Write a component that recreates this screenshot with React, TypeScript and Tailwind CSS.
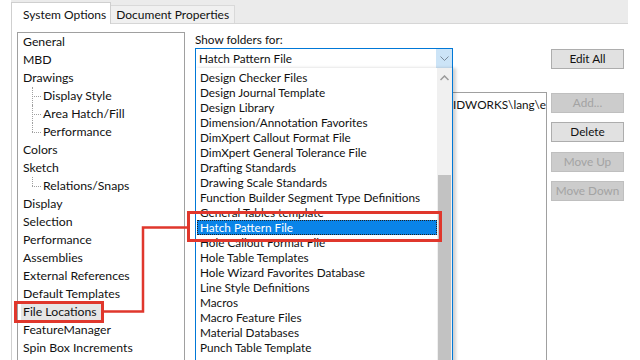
import React from "react";

const treeItems: { label: string; child?: boolean; last?: boolean; selected?: boolean }[] = [
  { label: "General" },
  { label: "MBD" },
  { label: "Drawings" },
  { label: "Display Style", child: true },
  { label: "Area Hatch/Fill", child: true },
  { label: "Performance", child: true, last: true },
  { label: "Colors" },
  { label: "Sketch" },
  { label: "Relations/Snaps", child: true, last: true },
  { label: "Display" },
  { label: "Selection" },
  { label: "Performance" },
  { label: "Assemblies" },
  { label: "External References" },
  { label: "Default Templates" },
  { label: "File Locations", selected: true },
  { label: "FeatureManager" },
  { label: "Spin Box Increments" },
];

const listItems = [
  "Design Checker Files",
  "Design Journal Template",
  "Design Library",
  "Dimension/Annotation Favorites",
  "DimXpert Callout Format File",
  "DimXpert General Tolerance File",
  "Drafting Standards",
  "Drawing Scale Standards",
  "Function Builder Segment Type Definitions",
  "General Tables template",
  "Hatch Pattern File",
  "Hole Callout Format File",
  "Hole Table Templates",
  "Hole Wizard Favorites Database",
  "Line Style Definitions",
  "Macros",
  "Macro Feature Files",
  "Material Databases",
  "Punch Table Template",
];

const buttons = [
  { label: "Edit All", disabled: false, mt: "mt-0" },
  { label: "Add...", disabled: true, mt: "mt-[24px]" },
  { label: "Delete", disabled: false, mt: "mt-[9px]" },
  { label: "Move Up", disabled: true, mt: "mt-[10px]" },
  { label: "Move Down", disabled: true, mt: "mt-[9px]" },
];

const TreeRow = ({ item }: { item: (typeof treeItems)[number] }) => {
  if (item.child) {
    return (
      <div className="relative h-[18px] flex items-center pl-[25px]">
        <div
          className={`absolute left-[14px] top-0 border-l border-dotted border-[#a0a0a0] ${
            item.last ? "h-[9px]" : "h-[18px]"
          }`}
        />
        <div className="absolute left-[14px] top-[9px] w-[9px] border-t border-dotted border-[#a0a0a0]" />
        <span>{item.label}</span>
      </div>
    );
  }
  return (
    <div className="h-[18px] flex items-center pl-[5px]">
      <span className={item.selected ? "bg-[#e6e6e6] pl-[2px] pr-[6px] -ml-[2px] leading-[16px]" : ""}>
        {item.label}
      </span>
    </div>
  );
};

const App = () => {
  return (
    <div
      className="relative w-[640px] h-[360px] overflow-hidden bg-white text-[11.75px] text-[#111]"
      style={{ fontFamily: 'Lato, "Noto Sans", sans-serif' }}
    >
      {/* tab strip */}
      <div className="ml-[11px] w-[617px] h-[24px] bg-[#ebebeb] border-b border-[#d6d6d6] flex items-end">
        <div className="h-[22px] -mb-px bg-white border border-b-0 border-[#cfcfcf] pl-[11px] pr-[4px] pt-[3px] text-[12px] whitespace-nowrap">
          System Options
        </div>
        <div className="h-[18px] bg-[#f0f0f0] border border-b-0 border-l-0 border-[#d9d9d9] px-[5px] leading-[17px] text-[12px] whitespace-nowrap">
          Document Properties
        </div>
      </div>

      {/* panel */}
      <div className="ml-[11px] h-[336px] border-l border-[#d0d0d0] flex">
        <div className="ml-[5px] mt-[8px] w-[168px] border border-[#a0a0a0] border-b-0 overflow-hidden text-[12.25px]">
          {treeItems.map((item, i) => (
            <TreeRow key={i} item={item} />
          ))}
        </div>

        <div className="ml-[10px] mt-[7px] w-[352px] flex flex-col">
          <div className="h-[17px] leading-[17px]">Show folders for:</div>
          <div className="h-[20px]" />
          <div className="mt-[24px] flex-1 border border-[#a0a0a0] border-b-0 flex justify-end overflow-hidden">
            <div className="w-[93px] shrink-0 pt-[3px] whitespace-nowrap">IDWORKS\lang\en</div>
          </div>
        </div>

        <div className="ml-[4px] mt-[25px] w-[73px] flex flex-col">
          {buttons.map((b) => (
            <div
              key={b.label}
              className={`${b.mt} h-[20px] flex items-center justify-center border ${
                b.disabled
                  ? "bg-[#cccccc] border-[#bfbfbf] text-[#a3a3a3]"
                  : "bg-[#e1e1e1] border-[#adadad] text-[#111]"
              }`}
            >
              {b.label}
            </div>
          ))}
        </div>
      </div>

      {/* open combo box + dropdown list */}
      <div className="absolute left-[195px] top-[48px] w-[258px] h-[21px] border border-[#0078d7] bg-white flex">
        <div className="flex-1 pl-[3px] leading-[19px]">Hatch Pattern File</div>
        <div className="w-[16px] bg-[#cce4f7] flex items-center justify-center">
          <svg width="9" height="6" viewBox="0 0 9 6">
            <path d="M0.5 0.5 L4.5 4.5 L8.5 0.5" fill="none" stroke="#7a8a99" strokeWidth="1" />
          </svg>
        </div>
      </div>
      <div className="absolute left-[195px] top-[68px] w-[258px] h-[300px] border border-t-0 border-[#0078d7] bg-white flex shadow-[3px_0_3px_rgba(0,0,0,0.18)]">
        <div className="flex-1 pt-[2px] pl-px">
          {listItems.map((label) => {
            const sel = label === "Hatch Pattern File";
            return (
              <div
                key={label}
                className={`h-[15px] leading-[15px] pl-[3px] whitespace-nowrap ${
                  sel ? "bg-[#0a84e8] text-white outline-1 outline-dotted outline-[#222] -outline-offset-1" : ""
                }`}
              >
                {label}
              </div>
            );
          })}
        </div>
        <div className="w-[15px] flex flex-col bg-[#f0f0f0]">
          <div className="h-[17px] flex items-center justify-center pt-[3px]">
            <svg width="9" height="6" viewBox="0 0 9 6">
              <path d="M0.5 5 L4.5 1 L8.5 5" fill="none" stroke="#9a9a9a" strokeWidth="1.5" />
            </svg>
          </div>
          <div className="mt-[90px] flex-1 mx-px bg-[#c2c2c2]" />
        </div>
      </div>

      {/* annotations */}
      <div className="absolute left-[14px] top-[301px] w-[90px] h-[22px] border-[3px] border-[#e0372c]" />
      <div className="absolute left-[187px] top-[211px] w-[255px] h-[31px] border-[3px] border-[#e0372c]" />
      <svg className="absolute left-0 top-0" width="640" height="360">
        <polyline
          points="104,311.5 143,311.5 143,227.5 187,227.5"
          fill="none"
          stroke="#e0372c"
          strokeWidth="2.5"
        />
      </svg>
    </div>
  );
};

export default App;
